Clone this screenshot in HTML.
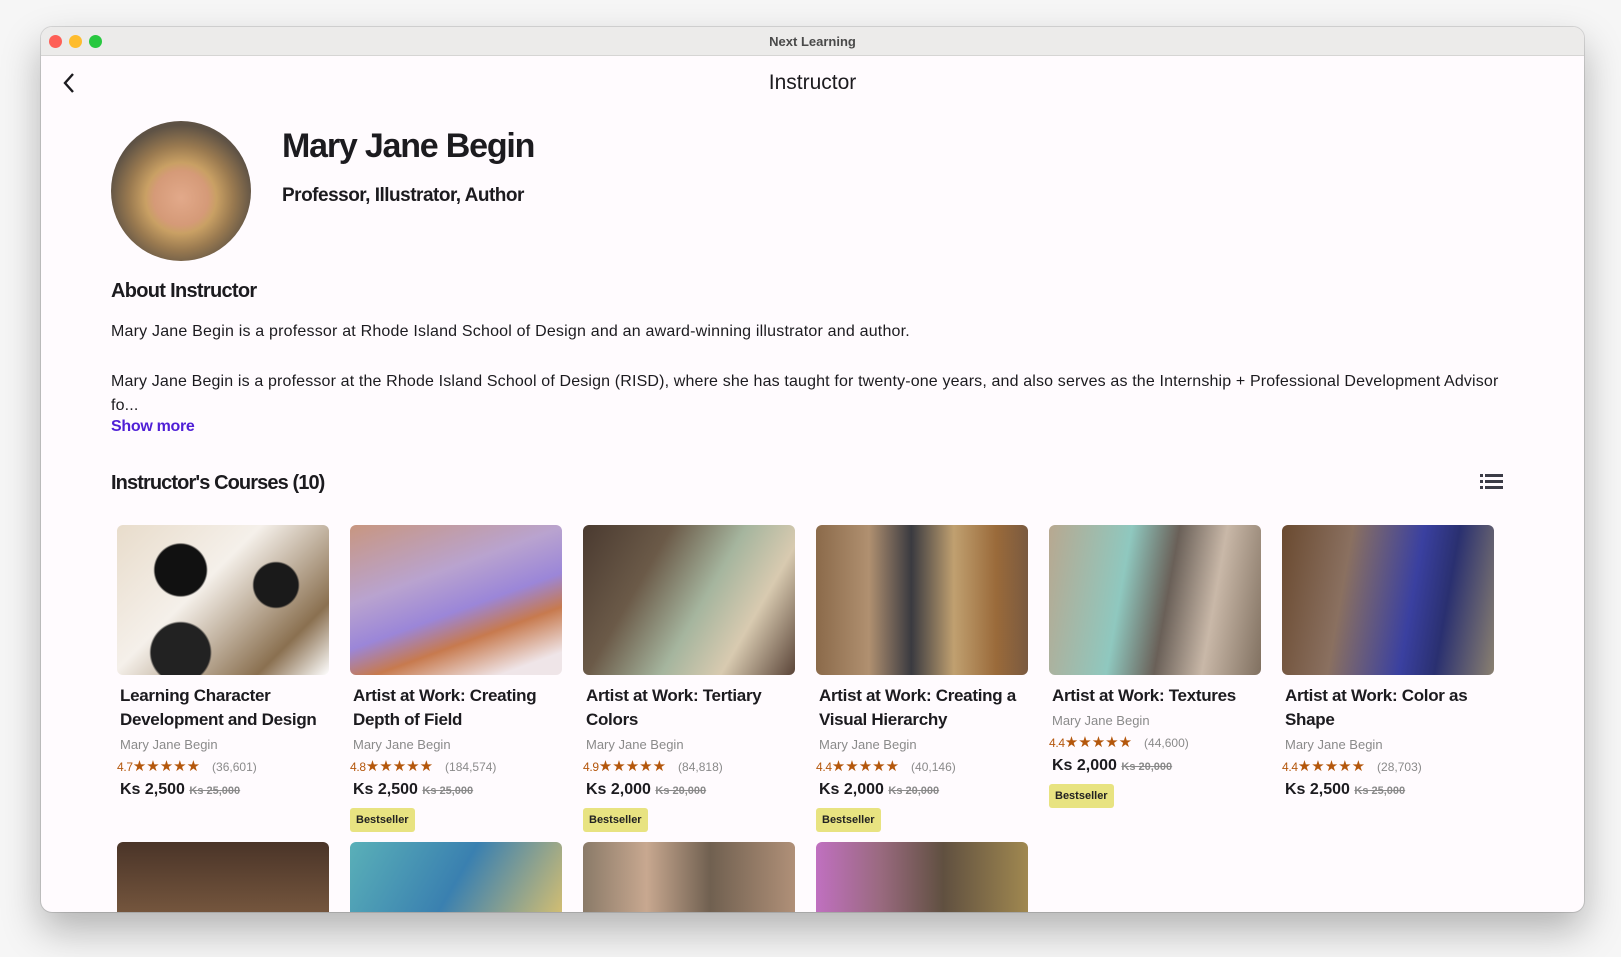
<!DOCTYPE html>
<html><head><meta charset="utf-8">
<style>
*{box-sizing:border-box;margin:0;padding:0}
body{width:1621px;height:957px;background:#f6f6f6;font-family:"Liberation Sans",sans-serif;position:relative;overflow:hidden;color:#1c1b1f}
.win{position:absolute;left:41px;top:27px;width:1543px;height:885px;border-radius:11px;background:#fffbfe;overflow:hidden;box-shadow:0 18px 40px rgba(0,0,0,.28),0 0 0 1px rgba(0,0,0,.12)}
.tb{height:29px;background:#ecebea;border-bottom:1px solid #d6d5d4;position:relative;font-size:13px;font-weight:bold;color:#4a4a4a;text-align:center;line-height:29px}
.dot{position:absolute;top:8px;width:13px;height:13px;border-radius:50%}
.abs{position:absolute;white-space:nowrap}
.card{position:absolute;top:498px;width:212px}
.img{width:212px;height:150px;border-radius:6px}
.t{font-size:17px;font-weight:bold;line-height:24px;margin:9px 0 0 3px;letter-spacing:-.3px;white-space:normal;width:206px}
.a{font-size:13px;color:#8a8a8a;margin:5px 0 0 3px}
.r{font-size:12px;color:#b4570c;margin-top:5px;letter-spacing:-.3px}
.r i{font-style:normal;font-size:15px;letter-spacing:0}
.r span{color:#8a8a8a;margin-left:12px;letter-spacing:0}
.p{font-size:16px;font-weight:bold;margin:6px 0 0 3px}
.p s{font-size:11px;color:#8a8a8a;font-weight:bold}
.b{display:inline-block;background:#e8e381;font-size:11px;font-weight:bold;padding:6px 6px;border-radius:3px;margin-top:9px;color:#222}
.row2{position:absolute;top:814px;width:212px;height:80px;border-radius:6px 6px 0 0}
</style></head><body>
<div class="win">
<div class="tb"><div class="dot" style="left:8px;background:#fe5f57"></div><div class="dot" style="left:28px;background:#febc2e"></div><div class="dot" style="left:48px;background:#28c840"></div>Next Learning</div>
<svg class="abs" style="left:21px;top:45px" width="14" height="22" viewBox="0 0 14 22"><path d="M11 2 L3 11 L11 20" fill="none" stroke="#1c1b1f" stroke-width="2.4"/></svg>
<div class="abs" style="left:0;width:1543px;text-align:center;top:44px;font-size:21px">Instructor</div>
<div class="abs" style="left:70px;top:94px;width:140px;height:140px;border-radius:50%;background:radial-gradient(circle at 50% 55%,#e2a98a 0,#d59a78 26%,#c9a064 34%,#9a7a50 50%,#5e5245 70%)"></div>
<div class="abs" style="left:241px;top:100px;font-size:34px;font-weight:bold;letter-spacing:-1.2px">Mary Jane Begin</div>
<div class="abs" style="left:241px;top:158px;font-size:19px;font-weight:bold;letter-spacing:-.5px">Professor, Illustrator, Author</div>
<div class="abs" style="left:70px;top:253px;font-size:20px;font-weight:bold;letter-spacing:-.7px">About Instructor</div>
<div class="abs" style="left:70px;top:296px;font-size:16px;letter-spacing:.2px">Mary Jane Begin is a professor at Rhode Island School of Design and an award-winning illustrator and author.</div>
<div class="abs" style="left:70px;top:343px;font-size:16px;letter-spacing:.15px;line-height:24px">Mary Jane Begin is a professor at the Rhode Island School of Design (RISD), where she has taught for twenty-one years, and also serves as the Internship + Professional Development Advisor<br>fo...</div>
<div class="abs" style="left:70px;top:391px;font-size:16px;font-weight:bold;color:#4f1fd6;letter-spacing:-.3px">Show more</div>
<div class="abs" style="left:70px;top:445px;font-size:20px;font-weight:bold;letter-spacing:-.9px">Instructor's Courses (10)</div>
<svg class="abs" style="left:1439px;top:447px" width="23" height="15" viewBox="0 0 23 15"><g fill="#3b3b46"><rect x="0" y="0" width="3" height="3"/><rect x="5" y="0" width="18" height="3"/><rect x="0" y="6" width="3" height="3"/><rect x="5" y="6" width="18" height="3"/><rect x="0" y="12" width="3" height="3"/><rect x="5" y="12" width="18" height="3"/></g></svg>

<div class="card" style="left:76px"><div class="img" style="background:radial-gradient(circle at 30% 30%,#111 0 14%,transparent 15%),radial-gradient(circle at 75% 40%,#1a1a1a 0 12%,transparent 13%),radial-gradient(circle at 30% 85%,#222 0 15%,transparent 16%),linear-gradient(135deg,#e8dccb,#f5f0ea 40%,#8a7050 80%,#fff)"></div><div class="t">Learning Character Development and Design</div><div class="a">Mary Jane Begin</div><div class="r">4.7<i>★★★★★</i><span>(36,601)</span></div><div class="p">Ks 2,500 <s>Ks 25,000</s></div></div>
<div class="card" style="left:309px"><div class="img" style="background:linear-gradient(160deg,#c89680 0,#b9a3cf 35%,#9b86d8 55%,#c77a4e 70%,#efe5e8 90%)"></div><div class="t">Artist at Work: Creating Depth of Field</div><div class="a">Mary Jane Begin</div><div class="r">4.8<i>★★★★★</i><span>(184,574)</span></div><div class="p">Ks 2,500 <s>Ks 25,000</s></div><div class="b">Bestseller</div></div>
<div class="card" style="left:542px"><div class="img" style="background:linear-gradient(120deg,#4a3a30 0,#6b5a48 30%,#a5b59e 55%,#d8cab0 75%,#5a4438)"></div><div class="t">Artist at Work: Tertiary Colors</div><div class="a">Mary Jane Begin</div><div class="r">4.9<i>★★★★★</i><span>(84,818)</span></div><div class="p">Ks 2,000 <s>Ks 20,000</s></div><div class="b">Bestseller</div></div>
<div class="card" style="left:775px"><div class="img" style="background:linear-gradient(90deg,#8b6a4a 0,#b09070 25%,#3a3a40 45%,#c0a070 65%,#9a6a3a 85%,#7a5a40)"></div><div class="t">Artist at Work: Creating a Visual Hierarchy</div><div class="a">Mary Jane Begin</div><div class="r">4.4<i>★★★★★</i><span>(40,146)</span></div><div class="p">Ks 2,000 <s>Ks 20,000</s></div><div class="b">Bestseller</div></div>
<div class="card" style="left:1008px"><div class="img" style="background:linear-gradient(100deg,#b8a890 0,#8fc8bf 35%,#6a6058 55%,#c9b8a8 75%,#807060)"></div><div class="t">Artist at Work: Textures</div><div class="a">Mary Jane Begin</div><div class="r">4.4<i>★★★★★</i><span>(44,600)</span></div><div class="p">Ks 2,000 <s>Ks 20,000</s></div><div class="b">Bestseller</div></div>
<div class="card" style="left:1241px"><div class="img" style="background:linear-gradient(100deg,#6a4a30 0,#8a7060 30%,#3a40a0 60%,#2a3070 75%,#8a8070)"></div><div class="t">Artist at Work: Color as Shape</div><div class="a">Mary Jane Begin</div><div class="r">4.4<i>★★★★★</i><span>(28,703)</span></div><div class="p">Ks 2,500 <s>Ks 25,000</s></div></div>

<div class="row2" style="left:76px;top:815px;background:linear-gradient(180deg,#4a3428,#7a5a40)"></div>
<div class="row2" style="left:309px;top:815px;background:linear-gradient(120deg,#5ab0b8,#3a80b0 50%,#d8c070)"></div>
<div class="row2" style="left:542px;top:815px;background:linear-gradient(90deg,#8a7a68,#c8a890 30%,#706050 60%,#b09078)"></div>
<div class="row2" style="left:775px;top:815px;background:linear-gradient(90deg,#c070c0,#9a6a80 30%,#605040 60%,#a08850)"></div>
</div>
</body></html>
